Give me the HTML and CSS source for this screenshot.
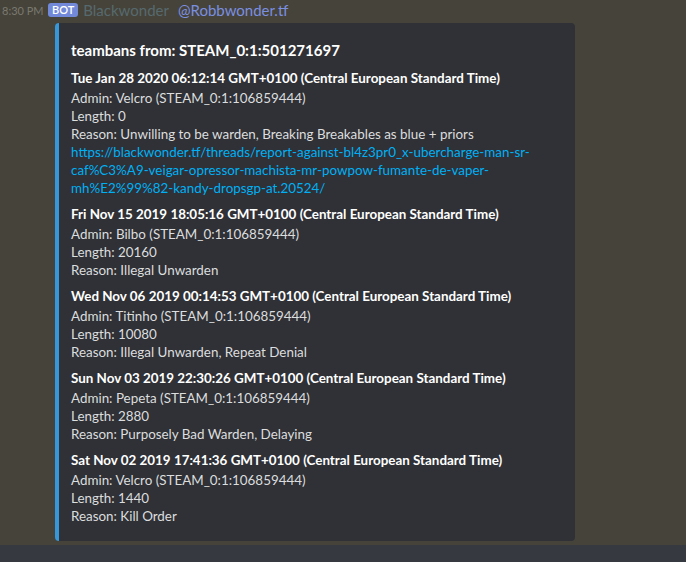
FILE: index.html
```html
<!DOCTYPE html>
<html>
<head>
<meta charset="utf-8">
<link rel="stylesheet" href="styles.css">
</head>
<body>
<div class="chat">
  <div class="message">
    <div class="header">
      <span class="time">8:30 PM</span>
      <span class="bot">BOT</span>
      <span class="user">Blackwonder</span>
      <span class="mention">@Robbwonder.tf</span>
    </div>
    <div class="embed">
      <div class="title">teambans from: STEAM_0:1:501271697</div>
      <div class="fields">
        <div class="field">
          <div class="name">Tue Jan 28 2020 06:12:14 GMT+0100 (Central European Standard Time)</div>
          <div class="value">Admin: Velcro (STEAM_0:1:106859444)<br>Length: 0<br>Reason: Unwilling to be warden, Breaking Breakables as blue + priors<br><a class="link">https://blackwonder.tf/threads/report-against-bl4z3pr0_x-ubercharge-man-sr-caf%C3%A9-veigar-opressor-machista-mr-powpow-fumante-de-vaper-mh%E2%99%82-kandy-dropsgp-at.20524/</a></div>
        </div>
        <div class="field">
          <div class="name">Fri Nov 15 2019 18:05:16 GMT+0100 (Central European Standard Time)</div>
          <div class="value">Admin: Bilbo (STEAM_0:1:106859444)<br>Length: 20160<br>Reason: Illegal Unwarden</div>
        </div>
        <div class="field">
          <div class="name">Wed Nov 06 2019 00:14:53 GMT+0100 (Central European Standard Time)</div>
          <div class="value">Admin: Titinho (STEAM_0:1:106859444)<br>Length: 10080<br>Reason: Illegal Unwarden, Repeat Denial</div>
        </div>
        <div class="field">
          <div class="name">Sun Nov 03 2019 22:30:26 GMT+0100 (Central European Standard Time)</div>
          <div class="value">Admin: Pepeta (STEAM_0:1:106859444)<br>Length: 2880<br>Reason: Purposely Bad Warden, Delaying</div>
        </div>
        <div class="field">
          <div class="name">Sat Nov 02 2019 17:41:36 GMT+0100 (Central European Standard Time)</div>
          <div class="value">Admin: Velcro (STEAM_0:1:106859444)<br>Length: 1440<br>Reason: Kill Order</div>
        </div>
      </div>
    </div>
  </div>
  <div class="bottom"></div>
</div>
</body>
</html>
```
FILE: styles.css
```css
html, body {
  margin: 0;
  padding: 0;
}
body {
  background: #46433a;
  font-family: Lato, "Open Sans", sans-serif;
  width: 686px;
  height: 562px;
  overflow: hidden;
}
.chat {
  display: flex;
  flex-direction: column;
  height: 562px;
}
.message {
  flex: 1;
  padding-left: 55px;
  position: relative;
}
.header {
  height: 23px;
  display: flex;
  align-items: flex-start;
  padding-top: 2px;
  box-sizing: border-box;
}
.time {
  position: absolute;
  left: 2px;
  top: 4px;
  font-size: 11px;
  color: #7a7970;
}
.bot {
  margin-left: -7px;
  margin-top: 1px;
  background: #7289da;
  color: #fff;
  font-size: 11px;
  font-weight: 600;
  border-radius: 3px;
  padding: 0 4px;
  line-height: 14px;
  height: 14px;
}
.user {
  margin-left: 5px;
  font-size: 15px;
  line-height: 17px;
  color: #566a6e;
}
.mention {
  margin-left: 9px;
  font-size: 15px;
  line-height: 17px;
  color: #7a8fe0;
}
.embed {
  box-sizing: border-box;
  width: 520px;
  background: #2f3136;
  border-left: 4px solid #3498db;
  border-radius: 4px;
  padding: 8px 16px 16px 12px;
}
.title {
  margin-top: 8px;
  font-size: 15px;
  font-weight: 700;
  line-height: 22px;
  color: #fff;
}
.fields {
  margin-top: 8px;
  display: flex;
  flex-direction: column;
  gap: 8px;
}
.name {
  font-size: 13.4px;
  font-weight: 700;
  line-height: 18px;
  color: #fff;
  margin-bottom: 2px;
}
.value {
  font-size: 13.4px;
  line-height: 18px;
  color: #dcddde;
}
.link {
  color: #00b0f4;
}
.bottom {
  height: 17px;
  background: #36393f;
}
```
